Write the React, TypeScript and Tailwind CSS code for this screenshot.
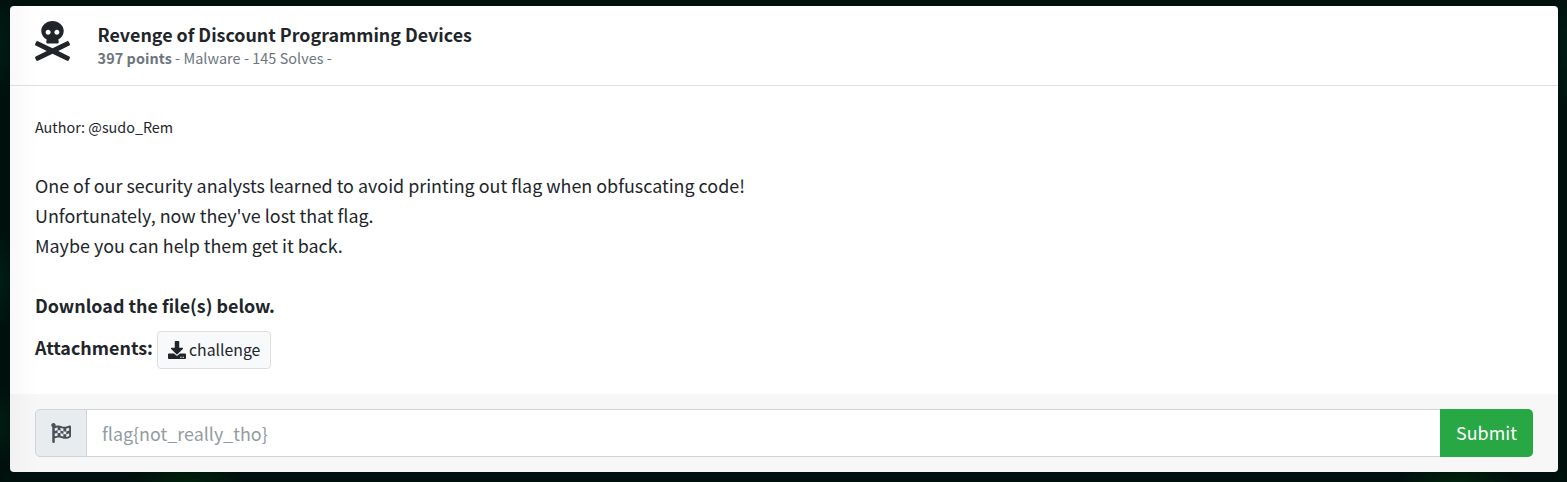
import { FaDownload, FaFlagCheckered, FaSkullCrossbones } from "react-icons/fa";

function Header() {
  return (
    <header className="flex h-20 shrink-0 items-start border-b border-[#dfdfdf] pl-[25px] pt-[15px]">
      <FaSkullCrossbones className="mr-[27.6px] h-10 w-[35px]" />
      <div className="flex flex-col items-start whitespace-nowrap">
        <h1 className="h-[26px] text-[17.87px] font-bold leading-[26px]">Revenge of Discount Programming Devices</h1>
        <p className="h-6 text-[14.4px] leading-[22px] tracking-[0.06px] text-[#6c757d]">
          <b>397 points</b> - Malware - 145 Solves -
        </p>
      </div>
    </header>
  );
}

function Description() {
  return (
    <main className="flex h-[308px] shrink-0 flex-col items-start whitespace-nowrap pl-[25px] pt-[30px] text-[17.9px] leading-[30px]">
      <p className="mb-6 h-[30px] w-max text-[14.35px] leading-[22px]">Author: @sudo_Rem</p>
      <p>One of our security analysts learned to avoid printing out flag when obfuscating code!</p>
      <p>Unfortunately, now they've lost that flag.</p>
      <p>Maybe you can help them get it back.</p>
      <p className="mt-[30px] font-bold">Download the file(s) below.</p>
      <div className="mt-[11px] flex">
        <span className="mr-1 w-[118px] pt-px font-bold">Attachments:</span>
        <button className="flex h-[38px] w-[114px] items-center rounded-[4px] border border-[#dddddd] bg-[#f8f9fa] pl-[10px] text-[15.8px]">
          <FaDownload className="mr-[3px] size-[18px]" />
          <span>challenge</span>
        </button>
      </div>
    </main>
  );
}

function FlagForm() {
  return (
    <footer className="h-[78px] shrink-0 bg-black/[0.03] px-[25px] pt-[15px]">
      <form className="flex h-12 text-[17.9px]" onSubmit={(e) => e.preventDefault()}>
        <span className="flex w-[52px] items-center justify-center rounded-l-[5px] border border-[#ced4da] bg-[#e9ecef] text-[#495057]">
          <FaFlagCheckered className="size-5" />
        </span>
        <input
          className="min-w-0 flex-1 border-y border-[#ced4da] bg-white px-[15px] outline-none placeholder:text-[#939ba2]"
          placeholder="flag{not_really_tho}"
        />
        <button className="w-[93px] rounded-r-[5px] bg-[#28a745] pb-0.5 text-white">Submit</button>
      </form>
    </footer>
  );
}

export default function App() {
  return (
    <div className="h-[482px] bg-[#00100d] bg-[radial-gradient(ellipse_25px_55px_at_0%_9%,#001b14_0%,transparent_100%),radial-gradient(ellipse_25px_50px_at_0%_58%,#001d15_0%,transparent_100%),radial-gradient(ellipse_25px_40px_at_0%_88%,#001d12_0%,transparent_100%),radial-gradient(ellipse_60px_20px_at_12%_100%,#00200c_0%,transparent_100%),radial-gradient(ellipse_60px_20px_at_93%_100%,#00220c_0%,transparent_100%),radial-gradient(ellipse_20px_60px_at_100%_10%,#001c14_0%,transparent_100%)] pb-[10px] pl-[10px] pr-[9px] pt-[6px] font-['Noto_Sans_CJK_SC','Noto_Sans',sans-serif] text-[#212529]">
      <section className="flex h-[466px] flex-col overflow-hidden rounded-[4px] bg-linear-to-r from-[#f9f9f9] to-white to-[28px]">
        <Header />
        <Description />
        <FlagForm />
      </section>
    </div>
  );
}
